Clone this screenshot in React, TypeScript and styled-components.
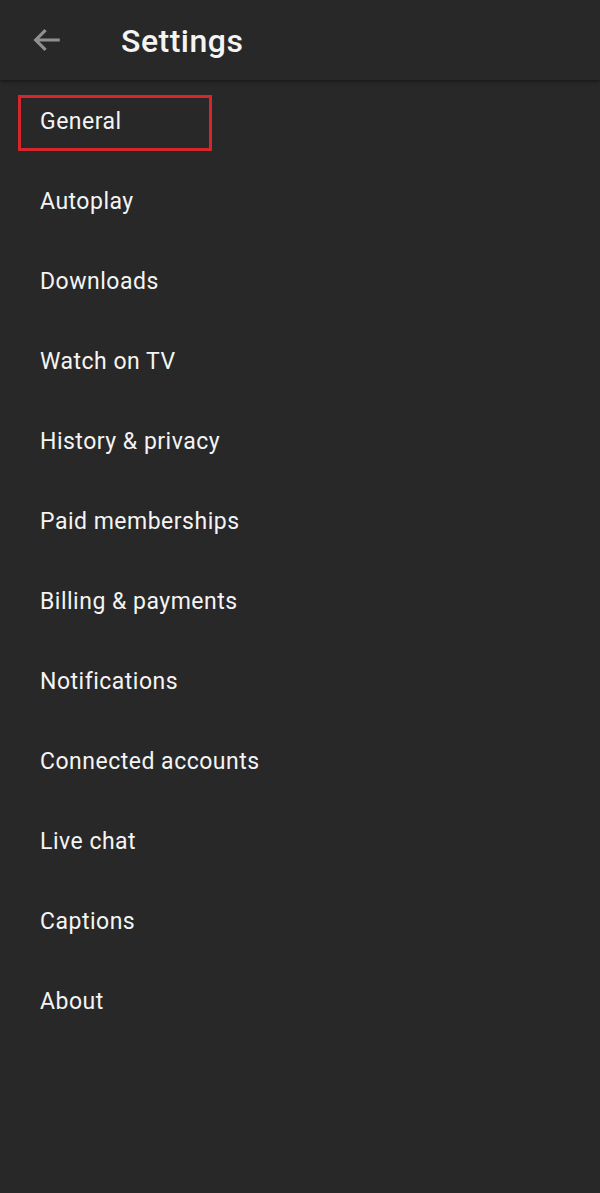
import React from 'react';
import styled, { createGlobalStyle } from 'styled-components';

const GlobalStyle = createGlobalStyle`
  html, body {
    margin: 0;
    padding: 0;
    background: #282828;
  }
  body {
    font-family: Roboto, "Liberation Sans", sans-serif;
  }
`;

const Page = styled.div`
  width: 600px;
  min-height: 1193px;
  background: #282828;
  display: flex;
  flex-direction: column;
`;

const Header = styled.header`
  height: 80px;
  display: flex;
  align-items: center;
  background: #282828;
  box-shadow: 0 2px 3px rgba(0, 0, 0, 0.35);
  position: relative;
  z-index: 1;
`;

const BackButton = styled.button`
  width: 94px;
  height: 80px;
  padding: 0 0 0 30px;
  border: 0;
  background: none;
  display: flex;
  align-items: center;
  color: #909090;
`;

const Title = styled.h1`
  margin: 2px 0 0 27px;
  font-size: 32px;
  font-weight: 500;
  letter-spacing: 0.5px;
  color: #f4f4f4;
`;

const List = styled.ul`
  list-style: none;
  margin: 0;
  padding: 0;
`;

const Item = styled.li<{ $active?: boolean }>`
  height: 80px;
  display: flex;
  align-items: center;
  padding: 2px 0 0 40px;
  box-sizing: border-box;
  font-size: 23px;
  letter-spacing: 0.5px;
  color: #f4f4f4;
  position: relative;

  ${({ $active }) =>
    $active &&
    `
    &::after {
      content: '';
      position: absolute;
      left: 18px;
      top: 15px;
      width: 194px;
      height: 56px;
      box-sizing: border-box;
      border: 3px solid #d6262c;
    }
  `}
`;

const items = [
  'General',
  'Autoplay',
  'Downloads',
  'Watch on TV',
  'History & privacy',
  'Paid memberships',
  'Billing & payments',
  'Notifications',
  'Connected accounts',
  'Live chat',
  'Captions',
  'About',
];

const BackArrow = () => (
  <svg width="34" height="34" viewBox="0 0 24 24" fill="none" stroke="currentColor" strokeWidth="2.2">
    <path d="M21 12H4M11 5l-7 7 7 7" />
  </svg>
);

export default function App() {
  return (
    <Page>
      <GlobalStyle />
      <Header>
        <BackButton aria-label="Back">
          <BackArrow />
        </BackButton>
        <Title>Settings</Title>
      </Header>
      <List>
        {items.map((label, i) => (
          <Item key={label} $active={i === 0}>
            {label}
          </Item>
        ))}
      </List>
    </Page>
  );
}
